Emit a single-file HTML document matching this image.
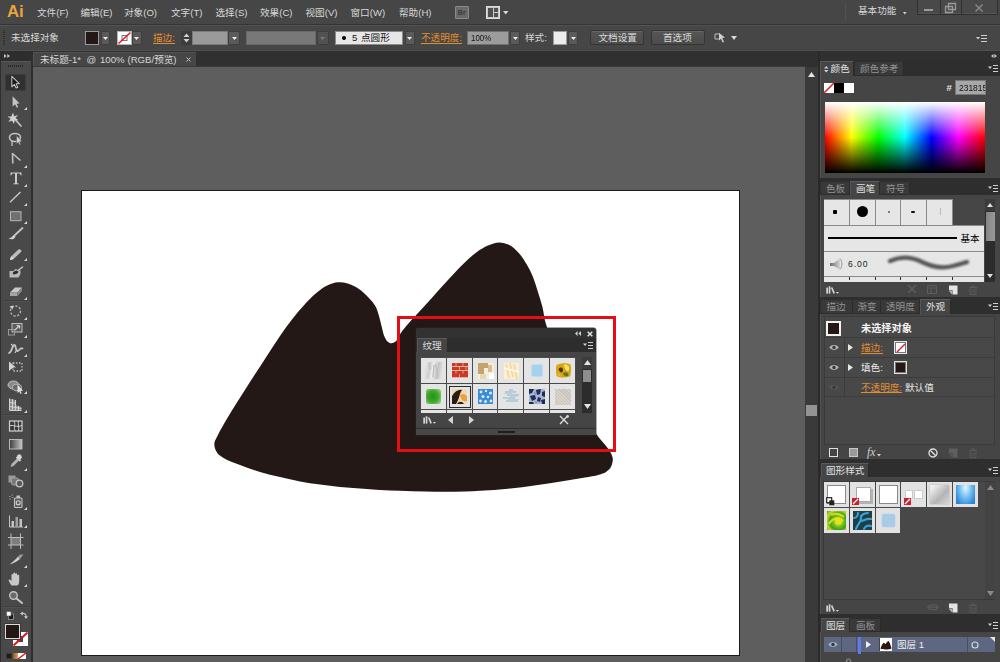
<!DOCTYPE html>
<html lang="zh"><head><meta charset="utf-8"><title>Adobe Illustrator</title>
<style>
html,body{margin:0;padding:0;background:#5e5e5e;}
body{width:1000px;height:662px;overflow:hidden;font-family:"Liberation Sans",sans-serif;font-size:11px;}
#app{position:relative;width:1000px;height:662px;overflow:hidden;background:#5e5e5e;}
#app div,#app span.t,#app svg.a{position:absolute;box-sizing:border-box;}
span.t{display:block;white-space:nowrap;font-family:"Liberation Sans","Noto Sans CJK SC",sans-serif;font-size:9.6px;line-height:12px;height:12px;}
svg.a{overflow:visible;}
.lt{font-family:"Liberation Sans",sans-serif;white-space:nowrap;}

</style></head>
<body>
<div id="app">
<div style="left:0px;top:0px;width:1000px;height:24px;background:#464646;"></div>
<div style="left:0px;top:24px;width:1000px;height:1px;background:#353535;"></div>
<span class="t" style="left:7.00px;top:0.52px;color:#e8a33c;font-size:16.8px;line-height:21px;height:21px;font-weight:bold;">Ai</span>
<span class="t" style="left:37.00px;top:7.03px;color:#d8d8d8;">文件(F)</span>
<span class="t" style="left:80.50px;top:7.03px;color:#d8d8d8;">编辑(E)</span>
<span class="t" style="left:124.00px;top:7.03px;color:#d8d8d8;">对象(O)</span>
<span class="t" style="left:171.00px;top:7.03px;color:#d8d8d8;">文字(T)</span>
<span class="t" style="left:215.50px;top:7.03px;color:#d8d8d8;">选择(S)</span>
<span class="t" style="left:260.00px;top:7.03px;color:#d8d8d8;">效果(C)</span>
<span class="t" style="left:305.50px;top:7.03px;color:#d8d8d8;">视图(V)</span>
<span class="t" style="left:350.50px;top:7.03px;color:#d8d8d8;">窗口(W)</span>
<span class="t" style="left:399.00px;top:7.03px;color:#d8d8d8;">帮助(H)</span>
<div style="left:455px;top:6px;width:14px;height:13px;background:#6a6a6a;border:1px solid #8a8a8a;border-radius:1px;"></div>
<span class="t" style="left:457.70px;top:8.30px;color:#3c3c3c;font-size:7.2px;line-height:9px;height:9px;font-weight:bold;">Br</span>
<div style="left:486px;top:6px;width:14px;height:13px;background:#c8c8c8;border:1px solid #dedede;"></div>
<div style="left:488px;top:8px;width:5px;height:9px;background:#505050;"></div>
<div style="left:494px;top:8px;width:4px;height:4px;background:#505050;"></div>
<div style="left:494px;top:13px;width:4px;height:4px;background:#505050;"></div>
<svg class="a" style="left:502.5px;top:10.5px;" width="5.5" height="3.5" viewBox="0 0 5.5 3.5"><path d="M0 0H5.500L2.750 3.500Z" fill="#d8d8d8"/></svg>
<span class="t" style="left:858.00px;top:5.03px;color:#d8d8d8;">基本功能</span>
<svg class="a" style="left:903.2px;top:11.5px;" width="3.6" height="2.4" viewBox="0 0 3.6 2.4"><path d="M0 0H3.600L1.800 2.400Z" fill="#d4d4d4"/></svg>
<div style="left:917px;top:0px;width:81px;height:15px;background:#494949;border:1px solid #303030;border-top:none;box-shadow:inset 0 -1px 0 #555;"></div>
<div style="left:940px;top:0px;width:1px;height:15px;background:#303030;"></div>
<div style="left:961px;top:0px;width:1px;height:15px;background:#303030;"></div>
<div style="left:845px;top:3px;width:1px;height:18px;background:#515151;"></div>
<div style="left:924px;top:9px;width:9px;height:2px;background:#9a9a9a;"></div>
<svg class="a" style="left:945px;top:3px;" width="12" height="10" viewBox="0 0 12 10"><path d="M3.5 0.5H10.5V6.5H3.5Z M0.5 3.5H7.5V9.5H0.5Z" fill="none" stroke="#9a9a9a" stroke-width="1.3"/></svg>
<svg class="a" style="left:975px;top:4px;" width="8" height="8" viewBox="0 0 8 8"><path d="M0.5 0.5L7.5 7.5M7.5 0.5L0.5 7.5" stroke="#8a8a8a" stroke-width="1.4"/></svg>
<div style="left:0px;top:25px;width:1000px;height:26px;background:#464646;"></div>
<div style="left:0px;top:25px;width:1000px;height:1px;background:#525252;"></div>
<div style="left:0px;top:50px;width:1000px;height:1px;background:#4f4f4f;"></div>
<div style="left:3px;top:30px;width:2px;height:1px;background:#2e2e2e;"></div>
<div style="left:3px;top:32px;width:2px;height:1px;background:#2e2e2e;"></div>
<div style="left:3px;top:34px;width:2px;height:1px;background:#2e2e2e;"></div>
<div style="left:3px;top:36px;width:2px;height:1px;background:#2e2e2e;"></div>
<div style="left:3px;top:38px;width:2px;height:1px;background:#2e2e2e;"></div>
<div style="left:3px;top:40px;width:2px;height:1px;background:#2e2e2e;"></div>
<div style="left:3px;top:42px;width:2px;height:1px;background:#2e2e2e;"></div>
<div style="left:3px;top:44px;width:2px;height:1px;background:#2e2e2e;"></div>
<span class="t" style="left:11.00px;top:32.03px;color:#d8d8d8;">未选择对象</span>
<div style="left:85px;top:31px;width:14px;height:14px;background:#231815;border:1px solid #9a9a9a;"></div>
<div style="left:100.5px;top:31px;width:9.5px;height:14px;background:#5a5a5a;border:1px solid #3e3e3e;border-radius:1px;"></div>
<svg class="a" style="left:102.75px;top:36.5px;" width="5" height="3" viewBox="0 0 5 3"><path d="M0 0H5L2.5 3Z" fill="#ececec"/></svg>
<div style="left:117px;top:31px;width:14.5px;height:14px;background:#ffffff;border:1px solid #b4b4b4;"></div>
<svg class="a" style="left:118px;top:32px;" width="13" height="12" viewBox="0 0 13 12"><rect x="4" y="3.5" width="5" height="5" fill="none" stroke="#777" stroke-width="1"/><path d="M0.5 11.5L12.5 0.5" stroke="#e01f26" stroke-width="1.6"/></svg>
<div style="left:132px;top:31px;width:9.5px;height:14px;background:#5a5a5a;border:1px solid #3e3e3e;border-radius:1px;"></div>
<svg class="a" style="left:134.25px;top:36.5px;" width="5" height="3" viewBox="0 0 5 3"><path d="M0 0H5L2.5 3Z" fill="#ececec"/></svg>
<span class="t" style="left:153.00px;top:32.03px;color:#e08e30;">描边:<b style="position:absolute;left:0;top:10.72px;width:21.87px;height:1px;background:#e08e30"></b></span>
<div style="left:181px;top:31px;width:10.5px;height:14px;background:#3c3c3c;border-radius:1px;"></div>
<svg class="a" style="left:183px;top:33px;" width="7" height="10" viewBox="0 0 7 10"><path d="M0.5 4H6.5L3.5 0.5Z M0.5 6H6.5L3.5 9.500Z" fill="#d0d0d0"/></svg>
<div style="left:191.5px;top:31px;width:36px;height:14px;background:#9a9a9a;border:1px solid #7a7a7a;"></div>
<div style="left:228px;top:31px;width:12px;height:14px;background:#5a5a5a;border:1px solid #3e3e3e;border-radius:1px;"></div>
<svg class="a" style="left:231.5px;top:36.5px;" width="5" height="3" viewBox="0 0 5 3"><path d="M0 0H5L2.5 3Z" fill="#ececec"/></svg>
<div style="left:246px;top:31px;width:70px;height:14px;background:#787878;border:1px solid #686868;"></div>
<div style="left:316.5px;top:31px;width:12px;height:14px;background:#515151;border:1px solid #3e3e3e;border-radius:1px;"></div>
<svg class="a" style="left:320px;top:36.5px;" width="5" height="3" viewBox="0 0 5 3"><path d="M0 0H5L2.5 3Z" fill="#7a7a7a"/></svg>
<div style="left:335px;top:31px;width:68px;height:14px;background:#e6e6e6;border:1px solid #8a8a8a;"></div>
<div style="left:342px;top:36px;width:4px;height:4px;background:#000;border-radius:2px;"></div>
<span class="t" style="left:352.00px;top:32.33px;color:#111;">5</span>
<span class="t" style="left:361.00px;top:32.13px;color:#111;">点圆形</span>
<div style="left:404.5px;top:31px;width:10px;height:14px;background:#5a5a5a;border:1px solid #3e3e3e;border-radius:1px;"></div>
<svg class="a" style="left:407px;top:36.5px;" width="5" height="3" viewBox="0 0 5 3"><path d="M0 0H5L2.5 3Z" fill="#ececec"/></svg>
<span class="t" style="left:421.00px;top:32.03px;color:#e08e30;">不透明度:<b style="position:absolute;left:0;top:10.72px;width:41.07px;height:1px;background:#e08e30"></b></span>
<div style="left:467px;top:31px;width:42px;height:14px;background:#9c9c9c;border:1px solid #6f6f6f;"></div>
<span class="t" style="left:470.50px;top:32.13px;color:#141414;transform:scaleX(0.82);transform-origin:0 0;">100%</span>
<div style="left:510px;top:31px;width:10px;height:14px;background:#5a5a5a;border:1px solid #3e3e3e;border-radius:1px;"></div>
<svg class="a" style="left:512.5px;top:36.5px;" width="5" height="3" viewBox="0 0 5 3"><path d="M0 0H5L2.5 3Z" fill="#ececec"/></svg>
<span class="t" style="left:525.00px;top:32.03px;color:#d8d8d8;">样式:</span>
<div style="left:553px;top:31px;width:14px;height:14px;background:#ececec;border:1px solid #9a9a9a;"></div>
<div style="left:568px;top:31px;width:10px;height:14px;background:#5a5a5a;border:1px solid #3e3e3e;border-radius:1px;"></div>
<svg class="a" style="left:570.5px;top:36.5px;" width="5" height="3" viewBox="0 0 5 3"><path d="M0 0H5L2.5 3Z" fill="#ececec"/></svg>
<div style="left:590px;top:30px;width:54px;height:15px;background:linear-gradient(#565656,#4b4b4b);border:1px solid #353535;border-radius:2px;box-shadow:inset 0 1px 0 #666;"></div>
<span class="t" style="left:598.50px;top:32.13px;color:#d8d8d8;">文档设置</span>
<div style="left:651px;top:30px;width:54px;height:15px;background:linear-gradient(#565656,#4b4b4b);border:1px solid #353535;border-radius:2px;box-shadow:inset 0 1px 0 #666;"></div>
<span class="t" style="left:663.00px;top:32.13px;color:#d8d8d8;">首选项</span>
<svg class="a" style="left:714px;top:32px;" width="12" height="12" viewBox="0 0 12 12"><path d="M1 2H6V7H1Z" fill="none" stroke="#bdbdbd" stroke-width="1"/><path d="M5 1L11 5.5L8.3 6L10 10L8.6 10.6L7 6.7L5 8.6Z" fill="#cfcfcf"/></svg>
<svg class="a" style="left:731px;top:36px;" width="6" height="4" viewBox="0 0 6 4"><path d="M0 0H6L3 4Z" fill="#d8d8d8"/></svg>
<svg class="a" style="left:976px;top:35px;" width="11" height="7" viewBox="0 0 11 7"><path d="M0 2H4L2 4.5Z" fill="#cfcfcf"/><path d="M5 0.5H11M5 3.5H11M5 6.5H11" stroke="#cfcfcf" stroke-width="1"/></svg>
<div style="left:0px;top:51px;width:1000px;height:16px;background:#303030;"></div>
<div style="left:33px;top:52px;width:163px;height:14.5px;background:#464646;border-left:1px solid #545454;border-top:1px solid #525252;"></div>
<div style="left:33px;top:66px;width:772px;height:1px;background:#3a3a3a;"></div>
<span class="t" style="left:40.00px;top:54.03px;color:#d8d8d8;">未标题-1*</span>
<span class="t" style="left:86.50px;top:54.03px;color:#d8d8d8;">@</span>
<span class="t" style="left:100.00px;top:54.03px;color:#d8d8d8;">100%</span>
<span class="t" style="left:127.50px;top:54.03px;color:#d8d8d8;">(RGB/预览)</span>
<svg class="a" style="left:185.5px;top:57px;" width="5" height="5" viewBox="0 0 5 5"><path d="M0.5 0.5L4.5 4.5M4.5 0.5L0.5 4.5" stroke="#c4c4c4" stroke-width="1"/></svg>
<div style="left:0px;top:51px;width:33px;height:611px;background:#2e2e2e;"></div>
<div style="left:0px;top:51px;width:31px;height:10px;background:#2d2d2d;"></div>
<svg class="a" style="left:4px;top:54px;" width="6" height="4" viewBox="0 0 6 4"><path d="M0 0V4L2.700 2Z M3.300 0V4L6 2Z" fill="#c4c4c4"/></svg>
<div style="left:1px;top:61px;width:29.7px;height:601px;background:#494949;border-top:1px solid #565656;"></div>
<div style="left:8px;top:65px;width:15px;height:2px;background:repeating-linear-gradient(to right,#262626 0,#262626 1px,transparent 1px,transparent 2px);"></div>
<div style="left:2px;top:300px;width:28px;height:1px;background:#3f3f3f;"></div>
<div style="left:2px;top:301px;width:28px;height:1px;background:#505050;"></div>
<div style="left:2px;top:413.5px;width:28px;height:1px;background:#3f3f3f;"></div>
<div style="left:2px;top:414.5px;width:28px;height:1px;background:#505050;"></div>
<div style="left:2px;top:606px;width:28px;height:1px;background:#3f3f3f;"></div>
<div style="left:2px;top:607px;width:28px;height:1px;background:#505050;"></div>
<div style="left:5px;top:74px;width:21px;height:17px;background:#303030;border:1px solid #3d3d3d;border-radius:1px;"></div>
<svg class="a" style="left:23.5px;top:107px;" width="3" height="3" viewBox="0 0 3 3"><path d="M3 0V3H0Z" fill="#d8d8d8"/></svg>
<svg class="a" style="left:23.5px;top:165px;" width="3" height="3" viewBox="0 0 3 3"><path d="M3 0V3H0Z" fill="#d8d8d8"/></svg>
<svg class="a" style="left:23.5px;top:183.5px;" width="3" height="3" viewBox="0 0 3 3"><path d="M3 0V3H0Z" fill="#d8d8d8"/></svg>
<svg class="a" style="left:23.5px;top:202.5px;" width="3" height="3" viewBox="0 0 3 3"><path d="M3 0V3H0Z" fill="#d8d8d8"/></svg>
<svg class="a" style="left:23.5px;top:221px;" width="3" height="3" viewBox="0 0 3 3"><path d="M3 0V3H0Z" fill="#d8d8d8"/></svg>
<svg class="a" style="left:23.5px;top:258.3px;" width="3" height="3" viewBox="0 0 3 3"><path d="M3 0V3H0Z" fill="#d8d8d8"/></svg>
<svg class="a" style="left:23.5px;top:296.5px;" width="3" height="3" viewBox="0 0 3 3"><path d="M3 0V3H0Z" fill="#d8d8d8"/></svg>
<svg class="a" style="left:23.5px;top:316.5px;" width="3" height="3" viewBox="0 0 3 3"><path d="M3 0V3H0Z" fill="#d8d8d8"/></svg>
<svg class="a" style="left:23.5px;top:334.5px;" width="3" height="3" viewBox="0 0 3 3"><path d="M3 0V3H0Z" fill="#d8d8d8"/></svg>
<svg class="a" style="left:23.5px;top:353.9px;" width="3" height="3" viewBox="0 0 3 3"><path d="M3 0V3H0Z" fill="#d8d8d8"/></svg>
<svg class="a" style="left:23.5px;top:391.3px;" width="3" height="3" viewBox="0 0 3 3"><path d="M3 0V3H0Z" fill="#d8d8d8"/></svg>
<svg class="a" style="left:23.5px;top:410.1px;" width="3" height="3" viewBox="0 0 3 3"><path d="M3 0V3H0Z" fill="#d8d8d8"/></svg>
<svg class="a" style="left:23.5px;top:467.5px;" width="3" height="3" viewBox="0 0 3 3"><path d="M3 0V3H0Z" fill="#d8d8d8"/></svg>
<svg class="a" style="left:23.5px;top:506.9px;" width="3" height="3" viewBox="0 0 3 3"><path d="M3 0V3H0Z" fill="#d8d8d8"/></svg>
<svg class="a" style="left:23.5px;top:525.3px;" width="3" height="3" viewBox="0 0 3 3"><path d="M3 0V3H0Z" fill="#d8d8d8"/></svg>
<svg class="a" style="left:23.5px;top:564.9px;" width="3" height="3" viewBox="0 0 3 3"><path d="M3 0V3H0Z" fill="#d8d8d8"/></svg>
<svg class="a" style="left:23.5px;top:583.5px;" width="3" height="3" viewBox="0 0 3 3"><path d="M3 0V3H0Z" fill="#d8d8d8"/></svg>
<svg class="a" style="left:6px;top:73px;" width="20" height="18" viewBox="0 0 20 18"><path transform="translate(1.200 1.200) scale(0.84)" d="M5.5 2.5V15L8.5 12.2L10.6 16.5L12.6 15.5L10.6 11.5L14.5 11.2Z" fill="#1a1a1a" stroke="#c8c8c8" stroke-width="1.2" stroke-linejoin="round"/></svg>
<svg class="a" style="left:6px;top:92.5px;" width="20" height="18" viewBox="0 0 20 18"><path transform="translate(1.700 1.300) scale(0.82)" d="M6 2.500V15L9 12.200L11 16.500L12.800 15.600L10.800 11.500L14.500 11.200Z" fill="#c4c4c4"/></svg>
<svg class="a" style="left:6px;top:111px;" width="20" height="18" viewBox="0 0 20 18"><path d="M7 1.500L8.200 5.300L12 4L9.600 7L12.500 9.200L8.700 9.400L8 13L6 9.800L2.300 10.800L4.600 7.800L1.500 5.400L5.400 5.400Z" fill="#d0d0d0"/><path d="M9.500 9L15.500 15.500" stroke="#c4c4c4" stroke-width="1.700"/></svg>
<svg class="a" style="left:6px;top:130px;" width="20" height="18" viewBox="0 0 20 18"><ellipse cx="9" cy="7.500" rx="5.500" ry="4" fill="none" stroke="#c4c4c4" stroke-width="1.600"/><path d="M6 11V16" stroke="#c4c4c4" stroke-width="1.300"/><path d="M10.500 5.500V14L12.300 12.300L13.500 15L14.800 14.400L13.600 11.800L16 11.600Z" fill="#d4d4d4" stroke="#474747" stroke-width=".5"/></svg>
<svg class="a" style="left:6px;top:149px;" width="20" height="18" viewBox="0 0 20 18"><path d="M6.800 14.500L6.500 4.500L14.500 11.500" fill="none" stroke="#c0c0c0" stroke-width="1.600" stroke-linejoin="round"/></svg>
<svg class="a" style="left:6px;top:169px;" width="20" height="18" viewBox="0 0 20 18"><path d="M4.500 3.500H15.500V6.500H14.700C14.500 5 14 4.500 12.500 4.500H11V13.500C11 14.300 11.500 14.500 12.700 14.600V15.300H7.300V14.600C8.500 14.500 9 14.300 9 13.500V4.500H7.500C6 4.500 5.500 5 5.300 6.500H4.500Z" fill="#cacaca"/></svg>
<svg class="a" style="left:6px;top:188px;" width="20" height="18" viewBox="0 0 20 18"><path d="M4 14.300L14.500 4" stroke="#c4c4c4" stroke-width="1.500"/></svg>
<svg class="a" style="left:6px;top:206.5px;" width="20" height="18" viewBox="0 0 20 18"><rect x="4.500" y="4.700" width="10.500" height="9" fill="#707070" stroke="#b4b4b4" stroke-width="1"/></svg>
<svg class="a" style="left:6px;top:225px;" width="20" height="18" viewBox="0 0 20 18"><path d="M16.500 3L8.500 10.500" stroke="#c4c4c4" stroke-width="1.800" stroke-linecap="round"/><path d="M2.500 13.500C5 13.500 6 11 8 10L9.500 11.800C8.500 14.500 5 15 2.500 13.500Z" fill="#d0d0d0"/></svg>
<svg class="a" style="left:6px;top:245px;" width="20" height="18" viewBox="0 0 20 18"><path d="M4 15L5 11.500L12.500 4.500A1.800 1.800 0 0 1 15 7L7.500 14Z" fill="#bebebe"/><path d="M4 15L5 11.500L7.500 14Z" fill="#e4e4e4"/></svg>
<svg class="a" style="left:6px;top:263.5px;" width="20" height="18" viewBox="0 0 20 18"><path d="M3.500 7H8C8 5 11 4.500 12 6.500H14.500V10L12.500 13.500H3.500Z" fill="#b8b8b8"/><ellipse cx="9.500" cy="8.500" rx="3" ry="1.600" fill="#2e2e2e" transform="rotate(-20 9.500 8.500)"/><path d="M12 6.500L16.500 3" stroke="#c8c8c8" stroke-width="1.500" stroke-linecap="round"/></svg>
<svg class="a" style="left:6px;top:282px;" width="20" height="18" viewBox="0 0 20 18"><path d="M4 10.500L9 5.500H16L11.500 10.500Z" fill="#c8c8c8"/><path d="M4 10.500H11.500V14H4Z" fill="#a4a4a4"/><path d="M11.500 10.500L16 5.500V9L11.500 14Z" fill="#888"/></svg>
<svg class="a" style="left:6px;top:302px;" width="20" height="18" viewBox="0 0 20 18"><circle cx="9.500" cy="9" r="5" fill="none" stroke="#b4b4b4" stroke-width="1.400" stroke-dasharray="2.200 1.600"/><path d="M3.500 4.500L7.500 3.500L6.500 7.500Z" fill="#d0d0d0"/></svg>
<svg class="a" style="left:6px;top:320px;" width="20" height="18" viewBox="0 0 20 18"><rect x="6" y="3.500" width="10" height="8.500" fill="#5c5c5c" stroke="#c0c0c0" stroke-width="1"/><rect x="2.500" y="9.500" width="6" height="5.500" fill="none" stroke="#9a9a9a" stroke-width="1"/><path d="M9 10L13.500 5.500M13.500 5.500H10.500M13.500 5.500V8.500" stroke="#d4d4d4" stroke-width="1.100" fill="none"/></svg>
<svg class="a" style="left:6px;top:339.5px;" width="20" height="18" viewBox="0 0 20 18"><path d="M3 13C6 12 6 6 8 5C10 4 9.500 10 11 11C13 12 14 7 16.500 8.500" fill="none" stroke="#c4c4c4" stroke-width="1.800" stroke-linecap="round"/><path d="M5 4L8 7M11 9L9 13" stroke="#c4c4c4" stroke-width="1.200"/></svg>
<svg class="a" style="left:6px;top:358px;" width="20" height="18" viewBox="0 0 20 18"><rect x="7" y="5" width="9" height="8" fill="none" stroke="#bdbdbd" stroke-width="1.300" stroke-dasharray="1.500 1.500"/><path d="M3 3.500V13L5.500 10.800L7.500 9.500L3 3.500Z" fill="#d4d4d4"/><path d="M3 3.500L10 9.500H5.500L3 12.500Z" fill="#d4d4d4"/></svg>
<svg class="a" style="left:6px;top:377.5px;" width="20" height="18" viewBox="0 0 20 18"><ellipse cx="7.500" cy="7" rx="5.500" ry="4" fill="#8a8a8a" stroke="#c4c4c4" stroke-width="1"/><ellipse cx="11" cy="9.500" rx="4.500" ry="3.300" fill="#6a6a6a" stroke="#b4b4b4" stroke-width="1"/><path d="M11.500 6.500V15L13.300 13.400L14.500 16L15.700 15.400L14.500 12.900L17 12.700Z" fill="#e0e0e0"/></svg>
<svg class="a" style="left:6px;top:396px;" width="20" height="18" viewBox="0 0 20 18"><path d="M3.500 2.500V14.500H15.500V11L9.500 9V4Z" fill="#8a8a8a"/><path d="M3.500 2.500V14.500H15.500M6.500 3.200V14.500M9.500 4V14.500M3.500 6.500L9.500 7.200M3.500 10.500L15.500 12.500M12.500 10V14.500" fill="none" stroke="#d0d0d0" stroke-width="1"/></svg>
<svg class="a" style="left:6px;top:416.5px;" width="20" height="18" viewBox="0 0 20 18"><rect x="3.500" y="4" width="12.500" height="10" fill="#3a3a3a" stroke="#d0d0d0" stroke-width="1.200"/><path d="M3.500 9C7 7 10 11 16 8.500M8 4C10 7 7 11 9.500 14M12.500 4C11.500 7 13.500 11 12.500 14" fill="none" stroke="#d0d0d0" stroke-width="1"/></svg>
<svg class="a" style="left:6px;top:434.5px;" width="20" height="18" viewBox="0 0 20 18"><defs><linearGradient id="tg" x1="0" x2="1"><stop offset="0" stop-color="#3c3c3c"/><stop offset="1" stop-color="#c8c8c8"/></linearGradient></defs><rect x="3.500" y="4.500" width="12.500" height="9.500" fill="url(#tg)" stroke="#b8b8b8" stroke-width="1"/></svg>
<svg class="a" style="left:6px;top:453px;" width="20" height="18" viewBox="0 0 20 18"><path d="M4.500 14L5.500 11L11 5.500L13 7.500L7.500 13Z" fill="#b4b4b4"/><path d="M10.500 4L14.500 8" stroke="#d4d4d4" stroke-width="1.800"/><path d="M12 5.500A2.300 2.300 0 1 1 15.500 3A2.300 2.300 0 0 1 13 6.500Z" fill="#d4d4d4"/></svg>
<svg class="a" style="left:6px;top:472px;" width="20" height="18" viewBox="0 0 20 18"><rect x="2.500" y="3.500" width="7" height="7" fill="#9a9a9a"/><rect x="5.500" y="6" width="7" height="7" rx="1.500" fill="#777" stroke="#aaa" stroke-width=".800"/><circle cx="13.500" cy="11.500" r="3.300" fill="#5a5a5a" stroke="#c4c4c4" stroke-width="1.300"/></svg>
<svg class="a" style="left:6px;top:492px;" width="20" height="18" viewBox="0 0 20 18"><rect x="8.500" y="6" width="7.500" height="9.500" rx="1" fill="#5a5a5a" stroke="#c4c4c4" stroke-width="1.100"/><rect x="10.500" y="3.500" width="3.500" height="2.500" fill="#c4c4c4"/><circle cx="12.200" cy="10.800" r="2" fill="none" stroke="#d4d4d4" stroke-width="1.100"/><path d="M3 4.500H4.500M5.500 3H7M3.500 7H5M6 5.500H7.500" stroke="#9a9a9a" stroke-width="1"/></svg>
<svg class="a" style="left:6px;top:511.5px;" width="20" height="18" viewBox="0 0 20 18"><path d="M3.500 3.500V15H17" fill="none" stroke="#c4c4c4" stroke-width="1"/><rect x="5.500" y="9" width="2.500" height="6" fill="#c4c4c4"/><rect x="9.500" y="5" width="2.500" height="10" fill="#a0a0a0"/><rect x="13.500" y="7" width="2.500" height="8" fill="#c4c4c4"/></svg>
<svg class="a" style="left:6px;top:531.5px;" width="20" height="18" viewBox="0 0 20 18"><rect x="5" y="5.500" width="9.500" height="7.500" fill="#7e7e7e"/><path d="M2 5.500H17.500M2 13H17.500M5 1.500V17M14.500 1.500V17" stroke="#bdbdbd" stroke-width="1"/></svg>
<svg class="a" style="left:6px;top:551px;" width="20" height="18" viewBox="0 0 20 18"><path d="M3.500 13.500C7 11 10 8 12 5.500L14 8C11 10.500 7.500 12.500 3.500 13.500Z" fill="#d0d0d0"/><path d="M12 5.500L14 3.500H17.500L14 8Z" fill="#9a9a9a"/></svg>
<svg class="a" style="left:6px;top:569.5px;" width="20" height="18" viewBox="0 0 20 18"><path d="M5.500 15.500C4 13.500 3 11.500 2.500 10C3.500 9 4.500 9.500 5.500 11V5C5.500 3.800 7 3.800 7.200 5V8.500V3.500C7.400 2.300 9 2.300 9.200 3.500V8.500V4C9.500 2.900 11 2.900 11.200 4V9V5.500C11.500 4.500 13 4.500 13.200 5.500V11.500C13.200 13.500 12.500 14.500 11.500 15.500Z" fill="#c8c8c8"/></svg>
<svg class="a" style="left:6px;top:588px;" width="20" height="18" viewBox="0 0 20 18"><circle cx="7.500" cy="7.500" r="3.800" fill="#6a6a6a" stroke="#c4c4c4" stroke-width="1.400"/><path d="M10.500 10.500L16 15" stroke="#c4c4c4" stroke-width="2" stroke-linecap="round"/></svg>
<svg class="a" style="left:5.5px;top:611px;" width="8" height="9" viewBox="0 0 8 9"><rect x="2.500" y="3" width="5" height="5.500" fill="#1a1a1a" stroke="#9a9a9a" stroke-width=".800"/><rect x="0.500" y="0.500" width="4.500" height="4.500" fill="#fff" stroke="#555" stroke-width=".600"/></svg>
<svg class="a" style="left:19.5px;top:610.5px;" width="8" height="8" viewBox="0 0 8 8"><path d="M2 2.500C5 2 6.500 3.500 6 6" fill="none" stroke="#c8c8c8" stroke-width="1.100"/><path d="M0 2.500L2.800 0.500V4.500Z M6 8L4 5.300H8Z" fill="#c8c8c8"/></svg>
<div style="left:12.5px;top:632px;width:15px;height:14px;background:#fff;"></div>
<div style="left:17px;top:636px;width:6px;height:6px;background:#474747;"></div>
<svg class="a" style="left:12.5px;top:632px;" width="15" height="14" viewBox="0 0 15 14"><path d="M0.500 13.500L14.500 0.500" stroke="#e0141e" stroke-width="2"/></svg>
<div style="left:4.5px;top:624px;width:15px;height:14.5px;background:#231815;border:1px solid #dcdcdc;box-shadow:0 0 0 1px #3a3a3a;"></div>
<div style="left:5.5px;top:652.5px;width:6px;height:6px;background:#231815;border:1px solid #3a3a3a;"></div>
<div style="left:12.5px;top:652.5px;width:5px;height:6px;background:linear-gradient(to right,#8a5a20,#d8a860);"></div>
<div style="left:18px;top:652.5px;width:8px;height:6px;background:#fff;"></div>
<svg class="a" style="left:18px;top:652.5px;" width="8" height="6" viewBox="0 0 8 6"><path d="M0 6L8 0" stroke="#e0141e" stroke-width="1.500"/></svg>
<div style="left:33px;top:67px;width:772px;height:595px;background:#5e5e5e;"></div>
<div style="left:81px;top:190px;width:659px;height:466px;background:#ffffff;border:1px solid #1a1a1a;"></div>
<svg class="a" style="left:0px;top:0px;" width="1000" height="662" viewBox="0 0 1000 662"><path d="M214.4 443.0C214.7 440.7 216.2 438.6 217.2 436.5C220.3 429.8 224.3 423.4 228.0 417.0C233.7 407.1 240.1 397.6 246.2 388.0C252.2 378.6 258.2 369.3 264.3 360.0C269.5 352.0 274.5 343.8 280.0 335.9C283.9 330.3 287.8 324.8 292.0 319.5C295.9 314.5 299.9 309.6 304.2 305.0C308.1 300.8 311.9 296.5 316.3 293.0C320.0 290.0 323.9 287.0 328.3 285.1C331.4 283.8 334.7 282.5 338.0 282.3C341.2 282.1 344.6 282.6 347.7 283.5C351.5 284.5 355.2 286.5 358.5 288.7C362.1 291.0 365.3 294.1 368.2 297.2C370.9 300.0 373.7 302.9 375.5 306.3C377.1 309.3 378.0 312.7 379.0 316.0C380.2 319.9 380.9 324.0 382.0 328.0C382.9 331.3 383.4 334.7 385.0 337.7C385.7 339.0 386.4 340.5 387.5 341.5C388.3 342.2 389.4 343.0 390.5 343.2C391.6 343.4 393.0 343.1 394.0 342.6C395.2 342.1 396.1 341.0 397.0 340.0C398.6 338.2 399.2 335.6 400.5 333.5C402.6 330.1 405.4 327.1 408.0 324.0C410.6 321.0 413.3 318.2 416.0 315.3C421.4 309.5 426.7 303.6 432.0 297.7C437.3 291.8 442.6 285.8 448.0 280.0C453.3 274.3 458.4 268.5 464.0 263.2C468.1 259.3 472.2 255.2 476.9 252.0C480.4 249.6 484.1 247.2 488.0 245.6C491.6 244.1 495.5 242.4 499.3 242.4C502.5 242.4 506.0 243.4 508.9 244.8C512.6 246.5 515.7 249.8 518.5 252.8C521.6 256.1 524.1 260.1 526.5 264.0C529.0 268.1 531.1 272.4 532.9 276.8C534.8 281.5 536.2 286.4 537.7 291.2C539.4 296.5 541.2 301.9 542.5 307.3C543.8 312.6 544.1 318.1 545.7 323.3C546.4 325.6 547.2 327.8 548.0 330.0C550.6 337.4 553.2 344.7 556.0 352.0C559.1 360.1 562.5 368.1 566.0 376.0C569.8 384.4 573.8 392.8 578.0 401.0C581.2 407.4 584.5 413.8 588.0 420.0C590.9 425.1 593.7 430.2 597.0 435.0C600.3 439.7 604.6 443.6 607.8 448.3C608.8 449.8 610.0 451.3 610.8 452.9C611.7 454.7 612.6 456.6 612.8 458.5C612.9 459.8 612.7 461.2 612.4 462.5C612.1 464.0 611.7 465.7 610.9 467.0C609.8 469.0 607.9 470.6 606.0 471.9C604.0 473.3 601.4 473.9 599.0 474.7C594.5 476.2 589.7 476.6 585.0 477.5C578.0 478.8 571.0 479.9 564.0 481.0C554.7 482.5 545.3 483.9 536.0 485.2C526.7 486.5 517.4 487.9 508.0 488.8C498.7 489.7 489.3 490.3 480.0 490.8C475.0 491.1 470.0 491.3 465.0 491.5C458.3 491.7 451.7 491.8 445.0 491.8C438.3 491.8 431.7 491.6 425.0 491.5C416.7 491.3 408.3 491.1 400.0 490.8C393.3 490.6 386.7 490.3 380.0 489.9C373.3 489.5 366.7 489.1 360.0 488.6C353.3 488.1 346.7 487.7 340.0 487.0C333.3 486.3 326.6 485.5 320.0 484.6C313.3 483.7 306.6 482.7 300.0 481.4C293.3 480.1 286.6 478.6 280.0 477.0C273.3 475.4 266.6 474.0 260.0 472.0C253.2 470.0 246.6 467.6 240.0 465.0C233.9 462.6 227.2 460.9 222.0 457.0C220.4 455.8 218.5 454.6 217.3 453.0C216.3 451.7 215.5 450.1 215.0 448.5C214.5 446.8 214.2 444.8 214.4 443.0Z" fill="#231815"/></svg>
<div style="left:397px;top:316px;width:219px;height:136px;border:3.700px solid #e30f15;"></div>
<div style="left:805px;top:67px;width:13px;height:595px;background:#3a3a3a;"></div>
<svg class="a" style="left:808px;top:72px;" width="7" height="5" viewBox="0 0 7 5"><path d="M0 5H7L3.500 0Z" fill="#e4e4e4"/></svg>
<div style="left:805.5px;top:404.7px;width:11.5px;height:11.4px;background:#939393;"></div>
<div style="left:818px;top:51px;width:2px;height:611px;background:#2a2a2a;"></div>
<div style="left:416px;top:327.5px;width:180.3px;height:107.5px;background:#454545;border-radius:3px 3px 0 0;box-shadow:0 0 0 0.700px rgba(40,40,40,.55);"></div>
<div style="left:416px;top:327.5px;width:180.3px;height:10.5px;background:#323232;border-radius:3px 3px 0 0;"></div>
<svg class="a" style="left:575px;top:331px;" width="6" height="5" viewBox="0 0 6 5"><path d="M2.6 0V5L0 2.5Z M6 0V5L3.4 2.5Z" fill="#d0d0d0"/></svg>
<svg class="a" style="left:586.5px;top:330.5px;" width="6" height="6" viewBox="0 0 6 6"><path d="M0.7 0.7L5.3 5.3M5.3 0.7L0.7 5.3" stroke="#e0e0e0" stroke-width="1.5"/></svg>
<div style="left:416px;top:338px;width:180.3px;height:14px;background:#2d2d2d;"></div>
<div style="left:417px;top:338px;width:30px;height:15px;background:#454545;border-left:1px solid #555;border-top:1px solid #5a5a5a;"></div>
<span class="t" style="left:422.50px;top:340.03px;color:#dedede;">纹理</span>
<svg class="a" style="left:583px;top:342px;" width="10" height="7" viewBox="0 0 10 7"><path d="M0 1.5H4L2 4Z" fill="#cfcfcf"/><path d="M5 0.5H10M5 3.5H10M5 6.5H10" stroke="#cfcfcf" stroke-width="1"/></svg>
<div style="left:420px;top:357px;width:156px;height:56px;background:#4a4a4a;overflow:hidden;"></div>
<div style="left:421px;top:358px;width:24.9px;height:25px;background:#e4e4e4;"></div>
<div style="left:421px;top:384px;width:24.9px;height:25px;background:#e4e4e4;"></div>
<div style="left:421px;top:410px;width:24.9px;height:3px;background:#e4e4e4;"></div>
<div style="left:446.8px;top:358px;width:24.9px;height:25px;background:#e4e4e4;"></div>
<div style="left:446.8px;top:384px;width:24.9px;height:25px;background:#e4e4e4;"></div>
<div style="left:446.8px;top:410px;width:24.9px;height:3px;background:#e4e4e4;"></div>
<div style="left:472.6px;top:358px;width:24.9px;height:25px;background:#e4e4e4;"></div>
<div style="left:472.6px;top:384px;width:24.9px;height:25px;background:#e4e4e4;"></div>
<div style="left:472.6px;top:410px;width:24.9px;height:3px;background:#e4e4e4;"></div>
<div style="left:498.4px;top:358px;width:24.9px;height:25px;background:#e4e4e4;"></div>
<div style="left:498.4px;top:384px;width:24.9px;height:25px;background:#e4e4e4;"></div>
<div style="left:498.4px;top:410px;width:24.9px;height:3px;background:#e4e4e4;"></div>
<div style="left:524.2px;top:358px;width:24.9px;height:25px;background:#e4e4e4;"></div>
<div style="left:524.2px;top:384px;width:24.9px;height:25px;background:#e4e4e4;"></div>
<div style="left:524.2px;top:410px;width:24.9px;height:3px;background:#e4e4e4;"></div>
<div style="left:550px;top:358px;width:24.9px;height:25px;background:#e4e4e4;"></div>
<div style="left:550px;top:384px;width:24.9px;height:25px;background:#e4e4e4;"></div>
<div style="left:550px;top:410px;width:24.9px;height:3px;background:#e4e4e4;"></div>
<div style="left:425px;top:362px;width:17px;height:17px;background:linear-gradient(100deg,#e8e8e8 0%,#cfcfcf 30%,#f0f0f0 45%,#c4c4c4 70%,#e6e6e6 100%);"></div>
<svg class="a" style="left:425px;top:362px;" width="17" height="17" viewBox="0 0 17 17"><path d="M4 1L5 7M10 2C12 6 12 11 13 15M9 3L8 15" stroke="#bdbdbd" stroke-width="1.3" fill="none"/></svg>
<div style="left:452px;top:363px;width:16px;height:15px;background:repeating-linear-gradient(to bottom,#c83a24 0,#c83a24 3px,#e8b4a4 3px,#e8b4a4 3.8px);"></div>
<svg class="a" style="left:452px;top:363px;" width="16" height="15" viewBox="0 0 16 15"><path d="M4 0V3M11 0V3M7.5 3.800V6.800M14 3.800V6.800M4 7.600V10.600M11 7.600V10.600M7.500 11.400V14.400" stroke="#e8b4a4" stroke-width=".8"/></svg>
<div style="left:478px;top:363px;width:16px;height:16px;background:#f4eee0;"></div>
<svg class="a" style="left:478px;top:363px;" width="16" height="16" viewBox="0 0 16 16"><path d="M0 0H10V5H6V11H0Z" fill="#c4a46c"/><path d="M10 2H14V9H10Z" fill="#d8bf8c"/><path d="M2 11H8V16H2Z" fill="#e8d8b0"/><path d="M11 10H16V16H11Z" fill="#fff"/></svg>
<div style="left:504px;top:363px;width:14.5px;height:15.5px;background:#fbeed2;"></div>
<svg class="a" style="left:504px;top:363px;" width="15" height="16" viewBox="0 0 15 16"><path d="M2 1L5 15M6 0L9 14M10 1L13 16" stroke="#f4d8a4" stroke-width="1.800" fill="none"/><path d="M0 5L15 9" stroke="#fff8e6" stroke-width="1.500"/></svg>
<div style="left:530.5px;top:364px;width:12.5px;height:12.5px;background:#a6d2ee;border-radius:2px;border:1px solid #c0def2;"></div>
<svg class="a" style="left:555px;top:362px;" width="17" height="17" viewBox="0 0 17 17"><path d="M1.500 3C5 1 12 0.500 15.500 2.500C16.500 6 16 12 15 14.500C10 16 5 16 1.500 14C0.800 10 0.800 6 1.500 3Z" fill="#d8a418"/><path d="M3.500 7C5.500 4.500 8.500 5.500 8 8.500S4.500 11 3.500 7Z" fill="#4e3a14"/><path d="M9 2.500C12.500 2 15 4.500 14 8S9 7 9 2.500Z" fill="#f6e458"/><path d="M8 11C10.500 9.500 14 10.500 13.500 13S8 14.500 8 11Z" fill="#5c7a24"/><path d="M2 12C4 11 6 12.500 5.500 14.500Z" fill="#f0c830"/></svg>
<div style="left:426px;top:389px;width:15px;height:15px;background:radial-gradient(circle at 45% 50%,#28901c 0%,#3fa82c 50%,#8ccc74 85%,#d4ecc8 100%);border-radius:2px;"></div>
<div style="left:447px;top:384px;width:25px;height:25px;border:1px solid #d8d8d8;"></div>
<div style="left:448.5px;top:385.5px;width:22px;height:22px;border:1px solid #2a2a2a;"></div>
<svg class="a" style="left:452px;top:389px;" width="15" height="15" viewBox="0 0 15 15"><rect width="15" height="15" fill="#f2d8b0"/><path d="M0 15V7C3 2 7 0 10 1C7 5 8 9 4 15Z" fill="#2a1c14"/><path d="M8 6C11 4 14 5 15 8V12C12 13 9 12 8 6Z" fill="#e8a040"/><path d="M5 15C7 12 10 12 12 15Z" fill="#2a1c14"/></svg>
<div style="left:478px;top:389px;width:15px;height:15px;background:#3c8cd4;"></div>
<svg class="a" style="left:478px;top:389px;" width="15" height="15" viewBox="0 0 15 15"><g fill="#d4ecfa"><circle cx="3" cy="3" r="1.4"/><circle cx="8" cy="2" r="1.2"/><circle cx="12.5" cy="4" r="1.5"/><circle cx="5" cy="7.5" r="1.6"/><circle cx="10" cy="8" r="1.3"/><circle cx="2.500" cy="12" r="1.4"/><circle cx="7.500" cy="12.500" r="1.5"/><circle cx="13" cy="12" r="1.400"/></g></svg>
<svg class="a" style="left:503px;top:389px;" width="17" height="15" viewBox="0 0 17 15"><g stroke="#8cb4cc" stroke-width="1.200" fill="none"><path d="M2 3H13M4 6H16M0 9H12M3 12H15M6 1H10"/></g><g stroke="#b8d0e0" stroke-width="1"><path d="M1 4.5H9M7 7.500H14M5 10.500H16"/></g></svg>
<div style="left:529px;top:388.5px;width:15.5px;height:15.5px;background:#aab4cc;"></div>
<svg class="a" style="left:529px;top:389px;" width="16" height="15" viewBox="0 0 16 15"><g fill="#1c2c5c"><path d="M0 0H5L3 4L0 5Z"/><path d="M7 1L12 0L11 5L8 6Z"/><path d="M13 3L16 2V8L13 7Z"/><path d="M1 7L6 6L7 10L3 12Z"/><path d="M9 8L12 9L11 13L8 12Z"/><path d="M0 13L4 13L5 15H0Z"/><path d="M12 11L16 10V15H13Z"/></g><g fill="#6c84b8"><path d="M5 3L7 4L6 6Z"/><path d="M6 12L8 13L7 15Z"/></g></svg>
<div style="left:554.5px;top:388.5px;width:16.5px;height:16.5px;background:repeating-linear-gradient(45deg,#c8c4bc 0,#c8c4bc 1px,#d8d4cc 1px,#d8d4cc 2.2px);"></div>
<div style="left:582px;top:357px;width:10px;height:56px;background:#2c2c2c;"></div>
<div style="left:582px;top:357px;width:10px;height:12px;background:#3c3c3c;"></div>
<svg class="a" style="left:583.5px;top:360px;" width="7" height="5" viewBox="0 0 7 5"><path d="M0 5H7L3.5 0Z" fill="#e4e4e4"/></svg>
<div style="left:583px;top:370px;width:8px;height:12px;background:#8e8e8e;"></div>
<svg class="a" style="left:583.5px;top:404px;" width="7" height="5" viewBox="0 0 7 5"><path d="M0 0H7L3.5 5Z" fill="#e4e4e4"/></svg>
<svg class="a" style="left:423px;top:416px;" width="13" height="8" viewBox="0 0 13 8"><rect x="0.300" y="1.600" width="1.700" height="6" fill="#d4d4d4"/><rect x="2.700" y="0.300" width="1.700" height="7.300" fill="#d4d4d4"/><path d="M5.600 1.500L8.200 7.400" stroke="#d4d4d4" stroke-width="1.700"/><path d="M9.800 6H13L11.400 7.800Z" fill="#d4d4d4"/></svg>
<svg class="a" style="left:448.3px;top:416px;" width="5" height="8" viewBox="0 0 5 8"><path d="M5 0V8L0 4Z" fill="#d4d4d4"/></svg>
<svg class="a" style="left:468.6px;top:416px;" width="5" height="8" viewBox="0 0 5 8"><path d="M0 0V8L5 4Z" fill="#d4d4d4"/></svg>
<svg class="a" style="left:559px;top:415px;" width="10" height="10" viewBox="0 0 10 10"><path d="M1 1L9 9M8 1.500L1 9" stroke="#dcdcdc" stroke-width="1.3"/><circle cx="8.600" cy="1.400" r="1.300" fill="#dcdcdc"/></svg>
<div style="left:416px;top:428px;width:180.3px;height:1px;background:#2e2e2e;"></div>
<div style="left:416px;top:429px;width:180.3px;height:6px;background:#484848;"></div>
<div style="left:498px;top:431px;width:17px;height:2px;background:#1e1e1e;"></div>
<div style="left:820px;top:51px;width:180px;height:611px;background:#2e2e2e;"></div>
<div style="left:820px;top:51px;width:180px;height:10px;background:#303030;"></div>
<svg class="a" style="left:990.5px;top:54px;" width="6" height="4" viewBox="0 0 6 4"><path d="M2.600 0V4L0 2Z M3.400 0V4L6 2Z" fill="#c8c8c8"/></svg>
<div style="left:820px;top:61px;width:34px;height:15px;background:#454545;border-left:1px solid #555;border-top:1px solid #5a5a5a;border-right:1px solid #2a2a2a;"></div>
<span class="t" style="left:830.50px;top:63.03px;color:#e2e2e2;">颜色</span>
<div style="left:855px;top:62px;width:49px;height:13px;background:#393939;border-right:1px solid #2a2a2a;"></div>
<span class="t" style="left:860.00px;top:63.03px;color:#929292;">颜色参考</span>
<svg class="a" style="left:988px;top:65px;" width="10" height="7" viewBox="0 0 10 7"><path d="M0 1.5H4L2 4Z" fill="#cfcfcf"/><path d="M5 0.5H10M5 3.5H10M5 6.5H10" stroke="#cfcfcf" stroke-width="1"/></svg>
<svg class="a" style="left:823.5px;top:66px;" width="4.5" height="6.5" viewBox="0 0 4.5 6.5"><path d="M0 2.500H4.500L2.250 0Z M0 4H4.500L2.250 6.500Z" fill="#d0d0d0"/></svg>
<div style="left:820px;top:76px;width:180px;height:102px;background:#454545;border-left:1px solid #535353;"></div>
<div style="left:824px;top:83px;width:10px;height:10px;background:#fff;"></div>
<svg class="a" style="left:824px;top:83px;" width="10" height="10" viewBox="0 0 10 10"><path d="M0 10L10 0" stroke="#e01f26" stroke-width="1.6"/></svg>
<div style="left:834px;top:83px;width:10px;height:10px;background:#000;"></div>
<div style="left:844px;top:83px;width:10px;height:10px;background:#fff;"></div>
<span class="t" style="left:946.50px;top:81.83px;color:#e4e4e4;font-weight:bold;">#</span>
<div style="left:955px;top:80px;width:31px;height:15px;background:#a8a8a8;border:1px solid #777;overflow:hidden;"><span class="t" style="left:2.50px;top:1.24px;color:#141414;font-size:9.4px;line-height:11.75px;height:11.75px;transform:scaleX(0.9);transform-origin:0 0;">231815</span></div>
<div style="left:825px;top:102px;width:160px;height:70.5px;background:linear-gradient(to bottom,rgba(255,255,255,1) 0%,rgba(255,255,255,0) 50%,rgba(0,0,0,0) 50%,rgba(0,0,0,1) 100%),linear-gradient(to right,#f00 0%,#ff0 16.66%,#0f0 33.33%,#0ff 50%,#00f 66.66%,#f0f 83.33%,#f00 100%);"></div>
<div style="left:821px;top:182px;width:28.5px;height:12px;background:#393939;border-right:1px solid #2a2a2a;"></div>
<span class="t" style="left:826.00px;top:183.03px;color:#929292;">色板</span>
<div style="left:850px;top:181px;width:30px;height:14px;background:#454545;border-left:1px solid #555;border-top:1px solid #5a5a5a;border-right:1px solid #2a2a2a;"></div>
<span class="t" style="left:856.00px;top:183.03px;color:#e2e2e2;">画笔</span>
<div style="left:880px;top:182px;width:30px;height:12px;background:#393939;border-right:1px solid #2a2a2a;"></div>
<span class="t" style="left:886.00px;top:183.03px;color:#929292;">符号</span>
<svg class="a" style="left:988px;top:185px;" width="10" height="7" viewBox="0 0 10 7"><path d="M0 1.5H4L2 4Z" fill="#cfcfcf"/><path d="M5 0.5H10M5 3.5H10M5 6.5H10" stroke="#cfcfcf" stroke-width="1"/></svg>
<div style="left:820px;top:195px;width:180px;height:102px;background:#454545;border-left:1px solid #535353;"></div>
<div style="left:824px;top:199px;width:160px;height:83px;background:#8a8a8a;"></div>
<div style="left:953px;top:199px;width:31px;height:26px;background:#464646;"></div>
<div style="left:824px;top:200px;width:24.85px;height:25px;background:#e6e6e6;"></div>
<div style="left:849.75px;top:200px;width:24.85px;height:25px;background:#e6e6e6;"></div>
<div style="left:875.5px;top:200px;width:24.85px;height:25px;background:#e6e6e6;"></div>
<div style="left:901.25px;top:200px;width:24.85px;height:25px;background:#e6e6e6;"></div>
<div style="left:927px;top:200px;width:24.85px;height:25px;background:#e6e6e6;"></div>
<div style="left:833px;top:210px;width:4px;height:4px;background:#000;border-radius:1px;"></div>
<div style="left:857px;top:206px;width:11px;height:11px;background:#000;border-radius:6px;"></div>
<div style="left:887.5px;top:211px;width:2px;height:2px;background:#555;border-radius:1px;"></div>
<div style="left:911px;top:210.5px;width:4px;height:2.6px;background:#111;border-radius:1.3px;"></div>
<div style="left:939.5px;top:208px;width:1px;height:7px;background:#bbb;"></div>
<div style="left:824px;top:226px;width:160px;height:25px;background:#e6e6e6;"></div>
<div style="left:828px;top:237.2px;width:129px;height:1.6px;background:#000;"></div>
<span class="t" style="left:960.50px;top:232.53px;color:#000;">基本</span>
<div style="left:824px;top:252px;width:160px;height:24px;background:#e6e6e6;"></div>
<svg class="a" style="left:829px;top:257px;" width="14" height="14" viewBox="0 0 14 14"><defs><linearGradient id="mg" x1="0" x2="1"><stop offset="0" stop-color="#6a6a6a"/><stop offset="1" stop-color="#d4d4d4"/></linearGradient></defs><path d="M1 6H5L11 1.5V12.5L5 9H1Z" fill="url(#mg)"/><path d="M11 1.5C13.5 4 13.5 10 11 12.5" fill="none" stroke="#999" stroke-width="1"/></svg>
<span class="t" style="left:848.00px;top:259.40px;color:#1a1a1a;font-size:8.6px;line-height:10.75px;height:10.75px;letter-spacing:0.9px;">6.00</span>
<svg class="a" style="left:885px;top:254px;" width="90" height="20" viewBox="0 0 90 20"><defs><filter id="bl" x="-10%" y="-50%" width="120%" height="200%"><feGaussianBlur stdDeviation="0.9"/></filter></defs><path d="M5 7C16 2 27 3 37 8S57 15 68 12S79 9 82 8" fill="none" stroke="#555" stroke-width="4.300" stroke-linecap="round" filter="url(#bl)"/></svg>
<div style="left:824px;top:276px;width:160px;height:6px;background:#e6e6e6;"></div>
<div style="left:824px;top:276px;width:160px;height:1px;background:#8a8a8a;"></div>
<div style="left:849px;top:277px;width:1px;height:3px;background:#333;"></div>
<div style="left:875px;top:277px;width:1px;height:3px;background:#333;"></div>
<div style="left:900px;top:277px;width:1px;height:3px;background:#333;"></div>
<div style="left:926px;top:277px;width:1px;height:3px;background:#333;"></div>
<div style="left:952px;top:277px;width:1px;height:3px;background:#333;"></div>
<div style="left:985px;top:199px;width:10px;height:83px;background:#2c2c2c;"></div>
<div style="left:985px;top:199px;width:10px;height:12px;background:#3a3a3a;"></div>
<svg class="a" style="left:987.2px;top:203px;" width="6" height="4" viewBox="0 0 6 4"><path d="M0 4H6L3 0Z" fill="#e0e0e0"/></svg>
<div style="left:986px;top:212px;width:8.5px;height:28.5px;background:linear-gradient(to right,#848484,#9a9a9a);"></div>
<svg class="a" style="left:987.2px;top:274px;" width="6" height="4" viewBox="0 0 6 4"><path d="M0 0H6L3 4Z" fill="#e0e0e0"/></svg>
<svg class="a" style="left:826px;top:285.5px;" width="13" height="8" viewBox="0 0 13 8"><rect x="0.300" y="1.600" width="1.700" height="6" fill="#d4d4d4"/><rect x="2.700" y="0.300" width="1.700" height="7.300" fill="#d4d4d4"/><path d="M5.600 1.500L8.200 7.400" stroke="#d4d4d4" stroke-width="1.700"/><path d="M9.800 6H13L11.400 7.800Z" fill="#d4d4d4"/></svg>
<svg class="a" style="left:907px;top:284px;" width="10" height="10" viewBox="0 0 10 10"><path d="M1 1L9 9M9 1L1 9" stroke="#5e5e5e" stroke-width="1.4"/></svg>
<svg class="a" style="left:927px;top:284.5px;" width="10" height="9" viewBox="0 0 10 9"><path d="M0.5 0.5H9.5V8.5H0.5ZM0.5 3H9.5M4 3V8.5" fill="none" stroke="#5e5e5e" stroke-width="1"/></svg>
<svg class="a" style="left:948px;top:284.5px;" width="10" height="10" viewBox="0 0 10 10"><path d="M1 0.5H9.5V9.5H4.5V5H1Z" fill="#e4e4e4"/><path d="M0.5 5.5H4V9.5Z" fill="#e4e4e4" opacity=".7"/></svg>
<svg class="a" style="left:968px;top:284.5px;" width="10" height="10" viewBox="0 0 10 10"><path d="M1 2.5H9M3.5 2V1H6.5V2M2 3V9.5H8V3M4 4.5V8M6 4.5V8" fill="none" stroke="#5a5a5a" stroke-width="1"/></svg>
<div style="left:821px;top:300px;width:32px;height:13px;background:#393939;border-right:1px solid #2a2a2a;"></div>
<span class="t" style="left:826.50px;top:301.03px;color:#929292;">描边</span>
<div style="left:853px;top:300px;width:28px;height:13px;background:#393939;border-right:1px solid #2a2a2a;"></div>
<span class="t" style="left:857.50px;top:301.03px;color:#929292;">渐变</span>
<div style="left:881px;top:300px;width:39px;height:13px;background:#393939;border-right:1px solid #2a2a2a;"></div>
<span class="t" style="left:886.00px;top:301.03px;color:#929292;">透明度</span>
<div style="left:920px;top:299px;width:31px;height:15px;background:#454545;border-left:1px solid #555;border-top:1px solid #5a5a5a;border-right:1px solid #2a2a2a;"></div>
<span class="t" style="left:926.00px;top:301.03px;color:#e2e2e2;">外观</span>
<svg class="a" style="left:988px;top:303px;" width="10" height="7" viewBox="0 0 10 7"><path d="M0 1.5H4L2 4Z" fill="#cfcfcf"/><path d="M5 0.5H10M5 3.5H10M5 6.5H10" stroke="#cfcfcf" stroke-width="1"/></svg>
<div style="left:820px;top:314px;width:180px;height:145px;background:#454545;border-left:1px solid #535353;"></div>
<div style="left:824px;top:316px;width:171px;height:129px;background:#484848;border:1px solid #3a3a3a;"></div>
<div style="left:826px;top:321px;width:15px;height:15px;background:#231815;border:2px solid #f2f2f2;"></div>
<span class="t" style="left:861.00px;top:322.69px;color:#f4f4f4;font-size:10.2px;line-height:12.75px;height:12.75px;font-weight:bold;">未选择对象</span>
<div style="left:825px;top:337px;width:169px;height:1px;background:#3c3c3c;"></div>
<div style="left:825px;top:357px;width:169px;height:1px;background:#3c3c3c;"></div>
<div style="left:825px;top:377px;width:169px;height:1px;background:#3c3c3c;"></div>
<div style="left:825px;top:396px;width:169px;height:1px;background:#3c3c3c;"></div>
<div style="left:844px;top:338px;width:1px;height:58px;background:#3c3c3c;"></div>
<svg class="a" style="left:829px;top:344px;" width="10" height="7" viewBox="0 0 10 7"><path d="M0.3 3.5C2.5 0.3 7.5 0.3 9.7 3.5C7.5 6.7 2.5 6.7 0.3 3.5Z" fill="#b4b4b4"/><circle cx="5" cy="3.5" r="1.7" fill="#3a3a3a"/></svg>
<svg class="a" style="left:829px;top:364px;" width="10" height="7" viewBox="0 0 10 7"><path d="M0.3 3.5C2.5 0.3 7.5 0.3 9.7 3.5C7.5 6.7 2.5 6.7 0.3 3.5Z" fill="#b4b4b4"/><circle cx="5" cy="3.5" r="1.7" fill="#3a3a3a"/></svg>
<svg class="a" style="left:829px;top:383.5px;" width="10" height="7" viewBox="0 0 10 7"><path d="M0.3 3.5C2.5 0.3 7.5 0.3 9.7 3.5C7.5 6.7 2.5 6.7 0.3 3.5Z" fill="#555"/><circle cx="5" cy="3.5" r="1.7" fill="#3a3a3a"/></svg>
<svg class="a" style="left:848px;top:344px;" width="5" height="7" viewBox="0 0 5 7"><path d="M0 0V7L5 3.5Z" fill="#e6e6e6"/></svg>
<svg class="a" style="left:848px;top:364px;" width="5" height="7" viewBox="0 0 5 7"><path d="M0 0V7L5 3.5Z" fill="#e6e6e6"/></svg>
<span class="t" style="left:861.00px;top:342.03px;color:#e08e30;">描边:<b style="position:absolute;left:0;top:10.72px;width:21.87px;height:1px;background:#e08e30"></b></span>
<div style="left:894px;top:341px;width:13px;height:13px;background:#fff;border:1px solid #e8e8e8;box-shadow:inset 0 0 0 1px #777;"></div>
<svg class="a" style="left:895.5px;top:342.5px;" width="10" height="10" viewBox="0 0 10 10"><path d="M1 9L9 1" stroke="#e01f40" stroke-width="1.5"/></svg>
<span class="t" style="left:861.00px;top:362.03px;color:#eaeaea;">填色:</span>
<div style="left:894px;top:361px;width:13px;height:13px;background:#231815;border:1.500px solid #e0e0e0;box-shadow:inset 0 0 0 1px #777;"></div>
<span class="t" style="left:861.00px;top:381.53px;color:#e08e30;">不透明度:<b style="position:absolute;left:0;top:10.72px;width:41.07px;height:1px;background:#e08e30"></b></span>
<span class="t" style="left:905.00px;top:381.53px;color:#eaeaea;">默认值</span>
<div style="left:829px;top:448px;width:9px;height:9px;border:1.5px solid #e0e0e0;"></div>
<div style="left:849px;top:448px;width:9px;height:9px;background:#9a9a9a;border:1.5px solid #c8c8c8;"></div>
<span class="t" style="left:867.00px;top:444.75px;color:#d0d0d0;font-family:'Liberation Serif',serif;font-style:italic;font-size:11.5px;line-height:14.38px;height:14.38px;">fx</span>
<svg class="a" style="left:877px;top:454px;" width="4" height="2.5" viewBox="0 0 4 2.5"><path d="M0 0H4L2 2.5Z" fill="#cfcfcf"/></svg>
<svg class="a" style="left:928px;top:448px;" width="10" height="10" viewBox="0 0 10 10"><circle cx="5" cy="5" r="4" fill="none" stroke="#dcdcdc" stroke-width="1.4"/><path d="M2.2 2.2L7.8 7.8" stroke="#dcdcdc" stroke-width="1.4"/></svg>
<svg class="a" style="left:948px;top:448px;" width="10" height="10" viewBox="0 0 10 10"><path d="M1 0.5H9.5V9.5H4.5V5H1Z" fill="#5e5e5e"/><path d="M0.5 5.5H4V9.5Z" fill="#5e5e5e" opacity=".7"/></svg>
<svg class="a" style="left:968px;top:448px;" width="10" height="10" viewBox="0 0 10 10"><path d="M1 2.5H9M3.5 2V1H6.5V2M2 3V9.5H8V3M4 4.5V8M6 4.5V8" fill="none" stroke="#585858" stroke-width="1"/></svg>
<div style="left:821px;top:463px;width:48px;height:14px;background:#454545;border-left:1px solid #555;border-top:1px solid #5a5a5a;border-right:1px solid #2a2a2a;"></div>
<span class="t" style="left:826.00px;top:465.03px;color:#e2e2e2;">图形样式</span>
<svg class="a" style="left:988px;top:467px;" width="10" height="7" viewBox="0 0 10 7"><path d="M0 1.5H4L2 4Z" fill="#cfcfcf"/><path d="M5 0.5H10M5 3.5H10M5 6.5H10" stroke="#cfcfcf" stroke-width="1"/></svg>
<div style="left:820px;top:477px;width:180px;height:137px;background:#454545;border-left:1px solid #535353;"></div>
<div style="left:823px;top:481px;width:172px;height:119px;background:#484848;border:1px solid #3a3a3a;"></div>
<div style="left:985px;top:482px;width:10px;height:117px;background:#434343;"></div>
<svg class="a" style="left:987px;top:485px;" width="7" height="5" viewBox="0 0 7 5"><path d="M0 5H7L3.5 0Z" fill="#8a8a8a"/></svg>
<svg class="a" style="left:987px;top:591px;" width="7" height="5" viewBox="0 0 7 5"><path d="M0 0H7L3.5 5Z" fill="#8a8a8a"/></svg>
<div style="left:824px;top:482px;width:24.9px;height:25px;background:#e2e2e2;"></div>
<div style="left:849.8px;top:482px;width:24.9px;height:25px;background:#e2e2e2;"></div>
<div style="left:875.6px;top:482px;width:24.9px;height:25px;background:#e2e2e2;"></div>
<div style="left:901.4px;top:482px;width:24.9px;height:25px;background:#e2e2e2;"></div>
<div style="left:927.2px;top:482px;width:24.9px;height:25px;background:#e2e2e2;"></div>
<div style="left:953px;top:482px;width:24.9px;height:25px;background:#e2e2e2;"></div>
<div style="left:824px;top:508px;width:24.9px;height:25px;background:#e2e2e2;"></div>
<div style="left:849.8px;top:508px;width:24.9px;height:25px;background:#e2e2e2;"></div>
<div style="left:875.6px;top:508px;width:24.9px;height:25px;background:#e2e2e2;"></div>
<div style="left:827px;top:485px;width:19px;height:19px;background:#fff;border:1px solid #8a8a8a;"></div>
<svg class="a" style="left:826px;top:497px;" width="9" height="9" viewBox="0 0 9 9"><rect x="0.7" y="0.7" width="5" height="5" fill="#fff" stroke="#222" stroke-width="1.2"/><rect x="3.3" y="3.3" width="5" height="5" fill="#222"/></svg>
<div style="left:856px;top:487px;width:15px;height:15px;background:#fff;border:1px solid #aaa;box-shadow:2px 2px 0 #b4b4b4;"></div>
<svg class="a" style="left:852px;top:498px;" width="7" height="7" viewBox="0 0 7 7"><rect width="7" height="7" fill="#c8202c"/><path d="M1 6L6 1" stroke="#fff" stroke-width="1.3"/></svg>
<div style="left:879px;top:485px;width:19px;height:19px;background:#fff;border:1px solid #8a8a8a;"></div>
<div style="left:905px;top:490px;width:8px;height:9px;background:#fff;border:1px solid #ccc;"></div>
<div style="left:914px;top:490px;width:9px;height:9px;background:#fff;border:1px solid #ccc;"></div>
<svg class="a" style="left:904px;top:498px;" width="7" height="7" viewBox="0 0 7 7"><rect width="7" height="7" fill="#c8202c"/><path d="M1 6L6 1" stroke="#fff" stroke-width="1.3"/></svg>
<div style="left:930px;top:485px;width:19px;height:19px;background:linear-gradient(135deg,#f0f0f0 10%,#b4b4b4 60%,#d8d8d8 100%);box-shadow:0 0 2px #aaa;"></div>
<div style="left:956px;top:485px;width:19px;height:19px;background:radial-gradient(ellipse at 50% 15%,#e8f6ff 0%,#7cc4f4 40%,#2b82d8 85%);"></div>
<div style="left:827px;top:511px;width:19px;height:19px;background:radial-gradient(circle at 60% 55%,#e8e020 0 18%,#7cc81e 30%,#3ca01c 55%,#c8d820 75%,#4aa81e 100%);"></div>
<svg class="a" style="left:827px;top:511px;" width="19" height="19" viewBox="0 0 19 19"><path d="M2 13C6 6 13 6 16 10M4 4C9 2 14 3 17 6" fill="none" stroke="#e4e41e" stroke-width="2.2" opacity=".85"/></svg>
<div style="left:853px;top:511px;width:19px;height:19px;background:#1d3f4a;"></div>
<svg class="a" style="left:853px;top:511px;" width="19" height="19" viewBox="0 0 19 19"><path d="M3 18C5 12 9 11 8 5M8 5C10 3 12 2 15 2M9 10C12 9 14 7 18 8M11 18C12 15 15 14 18 15M1 7C3 7 5 5 5 2" fill="none" stroke="#3b9fd0" stroke-width="2.2" stroke-linecap="round"/></svg>
<div style="left:882px;top:514px;width:13px;height:13px;background:#a8cce8;border-radius:2px;box-shadow:0 0 2px #a8cce8;"></div>
<svg class="a" style="left:826px;top:603.5px;" width="13" height="8" viewBox="0 0 13 8"><rect x="0.300" y="1.600" width="1.700" height="6" fill="#d4d4d4"/><rect x="2.700" y="0.300" width="1.700" height="7.300" fill="#d4d4d4"/><path d="M5.600 1.500L8.200 7.400" stroke="#d4d4d4" stroke-width="1.700"/><path d="M9.800 6H13L11.400 7.800Z" fill="#d4d4d4"/></svg>
<svg class="a" style="left:927px;top:603px;" width="12" height="8" viewBox="0 0 12 8"><rect x="2" y="2" width="8" height="4.5" rx="1.5" fill="none" stroke="#5e5e5e" stroke-width="1.2"/><path d="M0 4.2H12" stroke="#5e5e5e" stroke-width="1"/></svg>
<svg class="a" style="left:948px;top:602.5px;" width="10" height="10" viewBox="0 0 10 10"><path d="M1 0.5H9.5V9.5H4.5V5H1Z" fill="#e4e4e4"/><path d="M0.5 5.5H4V9.5Z" fill="#e4e4e4" opacity=".7"/></svg>
<svg class="a" style="left:968px;top:602.5px;" width="10" height="10" viewBox="0 0 10 10"><path d="M1 2.5H9M3.5 2V1H6.5V2M2 3V9.5H8V3M4 4.5V8M6 4.5V8" fill="none" stroke="#585858" stroke-width="1"/></svg>
<div style="left:821px;top:618px;width:29px;height:14px;background:#454545;border-left:1px solid #555;border-top:1px solid #5a5a5a;border-right:1px solid #2a2a2a;"></div>
<span class="t" style="left:826.00px;top:620.03px;color:#e2e2e2;">图层</span>
<div style="left:850px;top:619px;width:31px;height:12px;background:#393939;border-right:1px solid #2a2a2a;"></div>
<span class="t" style="left:856.00px;top:620.03px;color:#929292;">画板</span>
<svg class="a" style="left:988px;top:622px;" width="10" height="7" viewBox="0 0 10 7"><path d="M0 1.5H4L2 4Z" fill="#cfcfcf"/><path d="M5 0.5H10M5 3.5H10M5 6.5H10" stroke="#cfcfcf" stroke-width="1"/></svg>
<div style="left:820px;top:632px;width:180px;height:30px;background:#454545;border-left:1px solid #535353;"></div>
<div style="left:824px;top:637px;width:171px;height:15px;background:#5d6782;"></div>
<div style="left:841px;top:637px;width:1px;height:15px;background:#474e60;"></div>
<div style="left:856px;top:637px;width:1px;height:15px;background:#474e60;"></div>
<div style="left:967px;top:637px;width:1px;height:15px;background:#474e60;"></div>
<div style="left:857.5px;top:636.5px;width:3.2px;height:17px;background:#5b7cf0;"></div>
<svg class="a" style="left:828px;top:641px;" width="10" height="7" viewBox="0 0 10 7"><path d="M0.3 3.5C2.5 0.3 7.5 0.3 9.7 3.5C7.5 6.7 2.5 6.7 0.3 3.5Z" fill="#a4acc4"/><circle cx="5" cy="3.5" r="1.7" fill="#3a3a3a"/></svg>
<svg class="a" style="left:866px;top:641px;" width="5" height="7" viewBox="0 0 5 7"><path d="M0 0V7L5 3.5Z" fill="#f0f0f0"/></svg>
<div style="left:878.5px;top:638px;width:13.5px;height:13px;background:#fff;border-left:1px solid #444;"></div>
<svg class="a" style="left:879.5px;top:638px;" width="12" height="13" viewBox="0 0 12 13"><path d="M0.500 10.500C1.500 8 3 4.500 4 4.800S4.800 6.500 5.500 6S7.500 2.800 8.500 3S10.800 8 11.500 10.200C11.500 11.500 2 12 0.500 10.500Z" fill="#2e1610"/></svg>
<span class="t" style="left:897.00px;top:639.03px;color:#f0f0f0;">图层 1</span>
<svg class="a" style="left:971px;top:641px;" width="8" height="8" viewBox="0 0 8 8"><circle cx="4" cy="4" r="3" fill="none" stroke="#d8d8d8" stroke-width="1.1"/></svg>
<svg class="a" style="left:990px;top:637px;" width="5" height="5" viewBox="0 0 5 5"><path d="M0 0H5V5Z" fill="#e8e8e8"/></svg>
<svg class="a" style="left:846px;top:658px;" width="5" height="4" viewBox="0 0 5 4"><circle cx="2.5" cy="3" r="2" fill="none" stroke="#9a9a9a" stroke-width="1"/></svg>
</div>
</body></html>
